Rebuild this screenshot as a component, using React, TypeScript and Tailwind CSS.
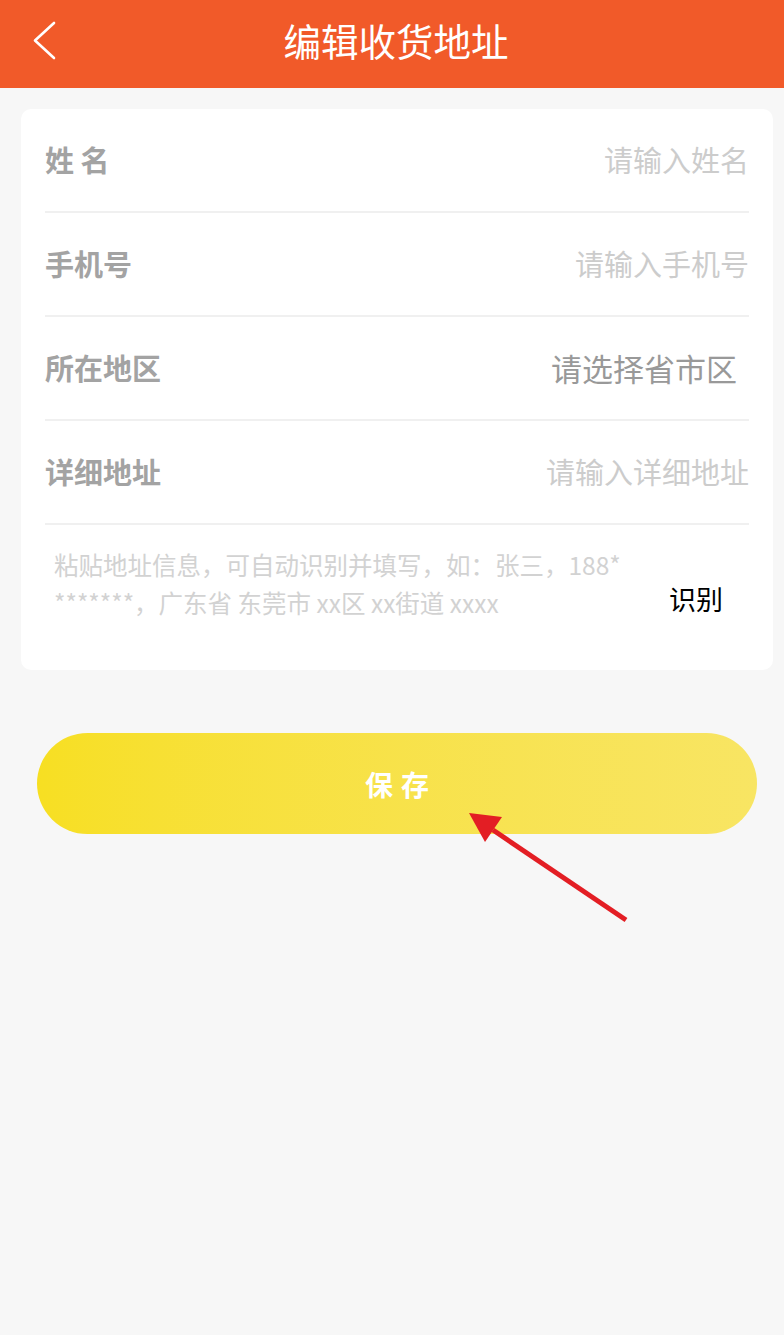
const font = { fontFamily: '"Noto Sans CJK SC", "Noto Sans", sans-serif' };

interface FieldRowProps {
  label: string;
  placeholder: string;
  selectable?: boolean;
}

function FieldRow({ label, placeholder, selectable }: FieldRowProps) {
  return (
    <div className="flex h-[104px] items-center justify-between border-b-2 border-[#f0f0f0]">
      <span className="text-[29px] font-bold text-[#a3a3a3]">{label}</span>
      {selectable ? (
        <span className="pr-[12px] text-[31px] text-[#999999]">{placeholder}</span>
      ) : (
        <span className="text-[29px] text-[#cccccc]">{placeholder}</span>
      )}
    </div>
  );
}

export default function App() {
  return (
    <div className="relative min-h-[1335px] w-full overflow-hidden bg-[#f7f7f7]" style={font}>
      {/* Top bar */}
      <header className="relative flex h-[88px] items-center justify-center bg-[#f15a29] pb-[8px] pl-[8px]">
        <button className="absolute left-0 top-0" aria-label="返回">
          <svg width="70" height="80" viewBox="0 0 70 80">
            <polyline
              points="54,23 35,40.5 54,58"
              fill="none"
              stroke="white"
              strokeWidth="2.6"
              strokeLinecap="round"
              strokeLinejoin="round"
            />
          </svg>
        </button>
        <h1 className="text-[37.5px] font-normal leading-none text-white">编辑收货地址</h1>
      </header>

      {/* Form card */}
      <div className="pl-[21px] pr-[11px] pt-[21px]">
        <section className="rounded-[10px] bg-white px-[24px]">
          <FieldRow label="姓 名" placeholder="请输入姓名" />
          <FieldRow label="手机号" placeholder="请输入手机号" />
          <FieldRow label="所在地区" placeholder="请选择省市区" selectable />
          <FieldRow label="详细地址" placeholder="请输入详细地址" />
          <div className="flex h-[145px] items-start justify-between pt-[21px]">
            <p className="w-[590px] pl-[9px] text-[24.5px] leading-[38px] text-[#d2d2d2]">
              粘贴地址信息，可自动识别并填写，如：张三，188*
              <br />
              *******，广东省 东莞市 xx区 xx街道 xxxx
            </p>
            <button className="mr-[26px] mt-[39px] text-[27px] leading-none text-black">识别</button>
          </div>
        </section>
      </div>

      {/* Save button */}
      <div className="pl-[37px] pr-[27px] pt-[63px]">
        <button className="flex h-[101px] w-full items-center justify-center rounded-full bg-gradient-to-r from-[#f7df22] to-[#f8e563] pl-[8px] text-[28px] font-bold tracking-[8px] text-white">
          保存
        </button>
      </div>

      {/* Annotation arrow */}
      <svg className="absolute left-0 top-0" width="784" height="1335" viewBox="0 0 784 1335">
        <line x1="626" y1="920" x2="493" y2="830" stroke="#e31e24" strokeWidth="5" />
        <polygon points="469,813 502,817 485,842" fill="#e31e24" />
      </svg>
    </div>
  );
}
